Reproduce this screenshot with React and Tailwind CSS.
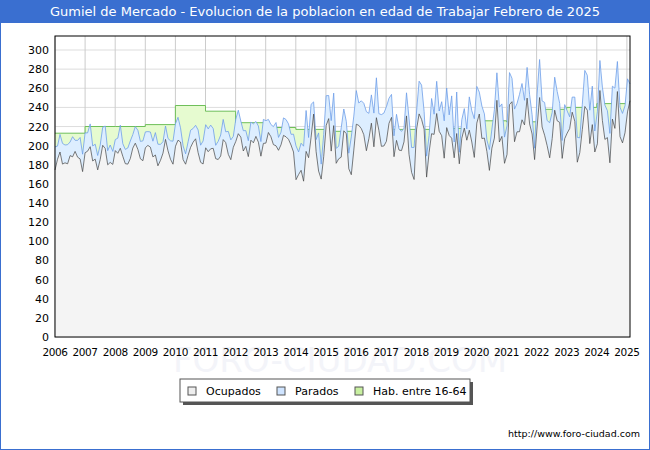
import React from 'react';

const X0 = 55, X1 = 630, Y0 = 337, YT = 36;
const yPx = (v) => Y0 - (v / 300) * 287;
const xPx = (m) => X0 + (m / (19 * 12 + 1)) * (X1 - X0);

// deterministic pseudo-random
let seed = 7;
const rnd = () => { seed = (seed * 16807) % 2147483647; return seed / 2147483647; };

const hab = [213, 220, 220, 222, 242, 236, 224, 219, 217, 215, 213, 217, 217, 218, 226, 225, 238, 240, 244, 245];
const N = 19 * 12 + 2;
const ocup = [], top = [];
for (let i = 0; i < N; i++) {
  const yr = i / 12;
  const s = Math.sin((i % 6) / 6 * Math.PI * 2);
  let base, amp, par;
  if (yr < 8) { base = 183 + yr * 2.5; amp = 7; par = 18; }
  else if (yr < 8.3) { base = 168; amp = 5; par = 30; }
  else { base = 195 + (yr - 8) * 2.6; amp = 20; par = 15; }
  const o = base + s * amp + (rnd() - 0.5) * amp * 2.4;
  ocup.push(o);
  top.push(o + par * (0.6 + rnd() * 0.8) + (yr > 8.3 ? rnd() * 25 : 0));
}

const line = (arr) => arr.map((v, i) => `${i ? 'L' : 'M'}${xPx(i).toFixed(1)},${yPx(v).toFixed(1)}`).join(' ');
const area = (arr) => `${line(arr)} L${xPx(arr.length - 1).toFixed(1)},${Y0} L${X0},${Y0} Z`;
const habPath = () => {
  let d = '';
  hab.forEach((v, k) => {
    const xa = X0 + k * 30.1, xb = Math.min(X0 + (k + 1) * 30.1, X1);
    d += `${k ? 'L' : 'M'}${xa.toFixed(1)},${yPx(v).toFixed(1)} L${xb.toFixed(1)},${yPx(v).toFixed(1)} `;
  });
  return d;
};

export default function App() {
  const years = Array.from({ length: 20 }, (_, i) => 2006 + i);
  const ticks = Array.from({ length: 16 }, (_, i) => i * 20);
  return (
    <div className="w-[650px] h-[450px] bg-white border border-[#3a6fd0] flex flex-col" style={{ fontFamily: '"DejaVu Sans", sans-serif' }}>
      <div className="h-[22px] bg-[#3a6fd0] text-white text-[13px] flex items-center justify-center shrink-0">
        Gumiel de Mercado - Evolucion de la poblacion en edad de Trabajar Febrero de 2025
      </div>
      <svg width="648" height="426" viewBox="1 23 648 426" className="block">
        <text x="340" y="372" textAnchor="middle" fontSize="34" fill="#f3f4f9" fontFamily="DejaVu Sans">FORO-CIUDAD.COM</text>
        {ticks.map((t) => (
          <g key={t}>
            <line x1={X0} x2={X1} y1={yPx(t)} y2={yPx(t)} stroke="#dddddd" />
            <text x={X0 - 6} y={yPx(t) + 4} textAnchor="end" fontSize="11" fill="#000">{t}</text>
          </g>
        ))}
        {years.map((y, k) => (
          <g key={y}>
            <line x1={X0 + k * 30.1} x2={X0 + k * 30.1} y1={YT} y2={Y0} stroke="#cccccc" />
            <text x={X0 + k * 30.1} y={Y0 + 19} textAnchor="middle" fontSize="10.5" letterSpacing="-0.4" fill="#000">{y}</text>
          </g>
        ))}
        <path d={`${habPath()} L${X1},${Y0} L${X0},${Y0} Z`} fill="#e6fbd0" />
        <path d={habPath()} fill="none" stroke="#6fbf5a" />
        <path d={area(top)} fill="#ddeeff" />
        <path d={line(top)} fill="none" stroke="#6e9ee8" strokeWidth="0.8" />
        <path d={area(ocup)} fill="#f4f4f4" />
        <path d={line(ocup)} fill="none" stroke="#444" strokeWidth="0.7" />
        <rect x={X0} y={YT} width={X1 - X0} height={Y0 - YT} fill="none" stroke="#000" />
        <rect x="183" y="382" width="290" height="23" fill="#555" />
        <rect x="180" y="379" width="290" height="23" fill="#fff" stroke="#555" />
        <rect x="188" y="387" width="8" height="8" fill="#eeeeee" stroke="#555" />
        <text x="206" y="395" fontSize="11">Ocupados</text>
        <rect x="277" y="387" width="8" height="8" fill="#cfe4ff" stroke="#555" />
        <text x="295" y="395" fontSize="11">Parados</text>
        <rect x="355" y="387" width="8" height="8" fill="#c8f0a0" stroke="#555" />
        <text x="373" y="395" fontSize="11">Hab. entre 16-64</text>
        <text x="640" y="437" textAnchor="end" fontSize="9.5">http://www.foro-ciudad.com</text>
      </svg>
    </div>
  );
}
